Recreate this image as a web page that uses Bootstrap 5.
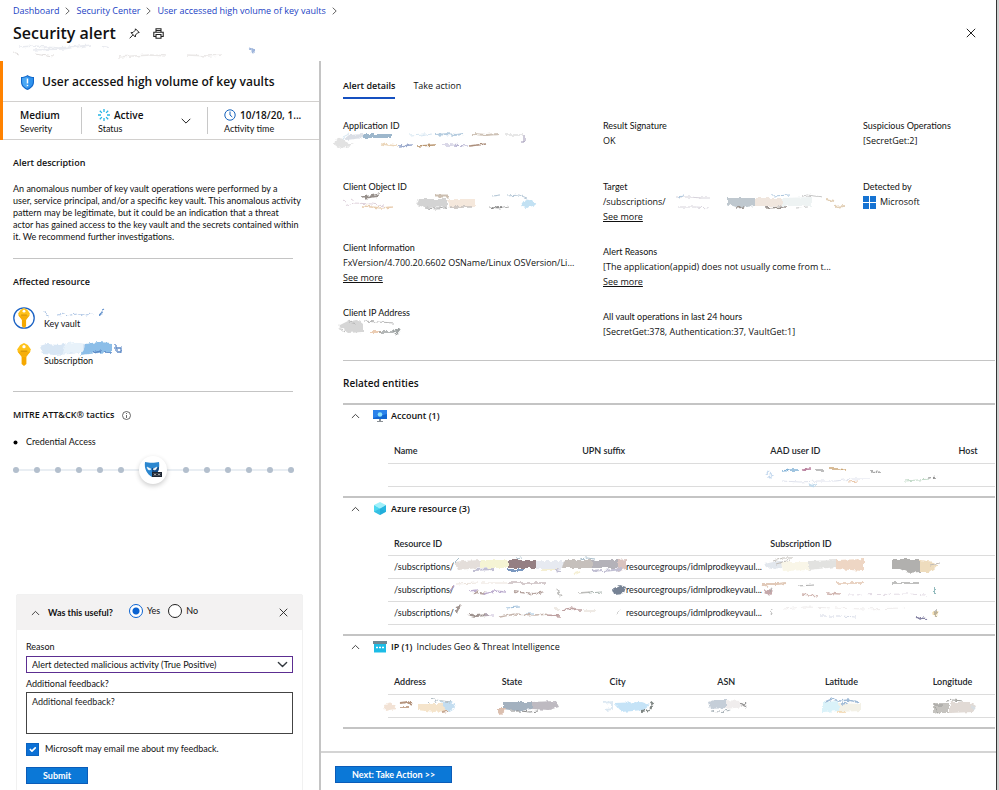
<!DOCTYPE html>
<html lang="en">
<head>
<meta charset="utf-8">
<meta name="viewport" content="width=device-width, initial-scale=1">
<title>Security alert</title>
<link href="https://cdn.jsdelivr.net/npm/bootstrap@5.3.0/dist/css/bootstrap.min.css" rel="stylesheet">
<style>
:root{--ui:"Open Sans","Noto Sans",sans-serif;--fine:Lato,"Open Sans",sans-serif;--rule:#d2d0ce}
body{font:400 9px/14px var(--ui);color:#111;background:#fff}
svg{display:block;flex:none;overflow:visible}
button{font-family:inherit}
.fine{font-family:var(--fine);font-size:9px}
.icon-btn{padding:0;border:0;background:none;line-height:0;color:#222}
.smear{filter:url(#rough);opacity:.85}
.frame{min-height:100vh;border-right:2px solid #cfcfcf}
.blade{min-width:0;border-right:1px solid #333}
.crumbs{padding:4px 13px 0}
.crumbs a{color:#1b3fc4;text-decoration:none}
.crumbs .breadcrumb{gap:6px;font-size:9px;line-height:14px;margin:0}
.page-title{font-size:16px;line-height:22px;font-weight:600}
.head-row{padding:2px 20px 0 13px;height:28px;gap:13px}
.head-note{height:15px;padding-left:13px}
.side{flex:0 0 321px;border-right:2px solid #c4c4c4}
.alert-head{border-left:3px solid #ff8200}
.alert-name{font-size:12px;font-weight:600;line-height:20px;padding:11px 18px 9px;border-bottom:1px solid var(--rule)}
.facts{border-bottom:1px solid var(--rule);padding:5px 0}
.fact{height:27px}
.fact.severity{flex:0 0 78px;padding-left:17px}
.fact.state{flex:0 0 126px}
.fact.split{border-left:1px solid #c8c8c8}
.fact-value{font-size:10px;line-height:16px;font-weight:600}
.fact-label{font-family:var(--fine);line-height:11px}
.side-body{padding:16px 13px 0}
.side-body hr,.details hr{margin:0;opacity:1;color:#c4c4c4}
.side-rule{width:280px;max-width:100%}
.h-mini{font-size:9px;line-height:14px;font-weight:600;margin:0}
.desc{line-height:12px;margin:13px 0 15px;white-space:nowrap}
.resources{padding:16px 0 24px;line-height:12px}
.resources .vault{padding-bottom:12px;gap:9px}
.resources .sub{gap:5px}
.tactic{padding-top:13px}
.track{height:28px;width:281px;max-width:100%;margin-top:7px;background:linear-gradient(#e9eef3,#e9eef3) center/100% 2px no-repeat}
.track i{width:6px;height:6px;border-radius:50%;background:#b3bfcd}
.track b{width:28px;height:28px;border-radius:50%;background:#fff;box-shadow:0 2px 5px #0003;padding:5px}
.feedback{margin:0 17px;box-shadow:0 0 1px #0005;background:#fff}
.feedback-head{background:#f3f2f2;height:35px;padding:0 14px}
.feedback-body{padding:10px 9px 6px}
.feedback .form-check-input{margin:0;float:none;border-color:#222;box-shadow:none}
.feedback .form-check-input[type=radio]{width:14px;height:14px}
.feedback .form-check-input[type=radio]:checked{background:radial-gradient(circle,#0b63d1 0 3px,#fff 4px);border-color:#0b63d1}
.feedback .form-check-input[type=checkbox]{width:13px;height:13px;border-radius:0;background-color:#0b70d5;border-color:#0b63c0;background-size:11px}
.feedback .form-select,.feedback .form-control{font:9px/12px var(--fine);color:#111;border-radius:0;padding:1px 5px;box-shadow:none}
.feedback .form-select{height:17px;border:1px solid #5c2e91;background-position:right 4px center;background-size:11px;margin:2px 0 4px}
.feedback .form-control{height:42px;border:1px solid #444;resize:none;padding:3px 5px;margin-top:1px}
.feedback .form-control::placeholder{color:#222}
.mail-row{gap:6px;padding:8px 0 11px}
.solid-btn{font:700 9px/15px var(--fine);padding:0 16px;border:1px solid #0b5cb8;border-radius:0;background:#0b78d7;color:#fff}
.main{min-width:0}
.details{padding:18px 1px 0 22px;flex:1 0 auto}
.tabs{gap:18px}
.tabs .nav-link{padding:0 0 4px;border:0;border-bottom:2px solid transparent;color:#111;font-size:9px;line-height:14px;border-radius:0}
.tabs .nav-link.active{border-color:#1550c0;font-weight:600}
.field-cols{margin-top:19px;padding-bottom:20px}
.field-col{flex:0 0 260px;min-width:0}
.field-col:last-child{flex:1 1 0}
.field{min-height:61px}
.field.tall{min-height:65px}
.field:last-child{min-height:0}
.field dt{font:400 9px/15px var(--fine)}
.field dd{margin:0;line-height:16px;white-space:nowrap}
.field a{display:block;line-height:13px;color:#111}
.related{font-size:10px;line-height:14px;font-weight:600;margin:15px 0 13px}
.entity{border-top:2px solid #c4c4c4;padding-bottom:9px}
.entity-head{padding:0 8px 12px;height:34px;line-height:18px}
.entity-head button{width:10px;margin-right:12px}
.entity-table{margin:0 0 0 45px;width:calc(100% - 45px);table-layout:fixed;font-size:9px}
.entity-table>:not(caption)>*>*{padding:0 6px;height:23px;border-bottom:1px solid #dcdcdc;vertical-align:middle;line-height:14px;white-space:nowrap}
.entity-table>thead>tr>th{height:24px;font:600 9px/23px var(--fine)}
.entity-table .wide{width:31%}
.entity-table .wider{width:62%}
.entity-table .even{width:17.75%}
.last-line{border-top:2px solid #c4c4c4;height:22px}
.foot{border-top:2px solid #d4d4d4;padding:13px 13px 7px 14px}
</style>
<script src="https://cdn.jsdelivr.net/npm/bootstrap@5.3.0/dist/js/bootstrap.bundle.min.js"></script>
</head>
<body>
<svg width="0" height="0" class="position-absolute" aria-hidden="true">
<defs>
<filter id="rough" x="-10%" y="-30%" width="120%" height="160%"><feTurbulence type="fractalNoise" baseFrequency=".25" numOctaves="2" seed="4" result="n"/><feDisplacementMap in="SourceGraphic" in2="n" scale="4" xChannelSelector="R" yChannelSelector="G"/></filter>
<symbol id="up" viewBox="0 0 10 6"><path d="M1 5.2 5 1.2 9 5.2" fill="none" stroke="#333" stroke-width="1"/></symbol>
<symbol id="sep" viewBox="0 0 5 8"><path d="M.7.7 4.2 4 .7 7.3" fill="none" stroke="#555" stroke-width=".9"/></symbol>
<symbol id="cross" viewBox="0 0 10 10"><path d="M.8.8 9.2 9.2M9.2.8.8 9.2" fill="none" stroke="#222" stroke-width="1"/></symbol>
<symbol id="key" viewBox="0 0 16 24"><path d="M5.500 12h5v10L8 24l-2.500-2z" fill="#f5a800"/><path d="M8 0 12 2 15 6.500 14.500 9 10.500 14H5.500L1.500 9 1 6.500 4 2z" fill="#ffc21a"/><path d="M5.500 14h5l4-5h-13z" fill="#f6ae0b"/><circle cx="8" cy="3.800" r="1.700" fill="#fff"/><path d="M4.500 8.500h7" stroke="#c78500"/></symbol>
</defs>
</svg>
<div class="frame d-flex">
<div class="blade d-flex flex-column flex-grow-1">
<header>
<nav class="crumbs" aria-label="breadcrumb">
<ol class="breadcrumb align-items-center">
<li><a href="#">Dashboard</a></li><li aria-hidden="true"><svg width="5" height="8"><use href="#sep"/></svg></li>
<li><a href="#">Security Center</a></li><li aria-hidden="true"><svg width="5" height="8"><use href="#sep"/></svg></li>
<li><a href="#">User accessed high volume of key vaults</a></li><li aria-hidden="true"><svg width="5" height="8"><use href="#sep"/></svg></li>
</ol>
</nav>
<div class="head-row d-flex align-items-center">
<h1 class="page-title m-0">Security alert</h1>
<button class="icon-btn" type="button" aria-label="Pin"><svg width="11" height="11" viewBox="0 0 11 11" fill="none" stroke="#222" stroke-width="1"><path d="M6.500.800 10.200 4.500 8.700 4.800 6.500 7 6.300 9 2 4.700 4 4.500 6.200 2.300zM4 6.800.700 10.300"/></svg></button>
<button class="icon-btn me-auto" type="button" aria-label="Print"><svg width="11" height="11" viewBox="0 0 11 11" fill="none" stroke="#222" stroke-width="1.100"><path d="M3 4V.800h5V4M2.500 8.500H.800V4.200h9.400v4.300H8.500M3 6.500h5v3.800H3zM3 2.500h5"/></svg></button>
<button class="icon-btn" type="button" aria-label="Close"><svg width="10" height="10"><use href="#cross"/></svg></button>
</div>
<div class="head-note"><svg class="smear" width="245" height="15" fill="none" aria-hidden="true"><path d="M6 1 22 0 45 2 68 0 78-1 50 3 20 4M88 0l8 2" stroke="#e6e8ee" stroke-width="1.500"/><path d="M0 6l6 2M22 8l12 2M33 9l8 1" stroke="#ddd9d8"/><path d="M105 11l15-1 18-1 16 1M174 9l20 1 14-1" stroke="#e7e4e3" stroke-width="1.500"/><path d="M236 2l3 1M239 7c3-2 1-4-2-4" stroke="#8aa6d4" stroke-width="1.300"/></svg></div>
</header>
<div class="d-flex flex-grow-1">
<aside class="side d-flex flex-column">
<section class="alert-head">
<h2 class="alert-name d-flex align-items-center gap-2 m-0"><svg width="13" height="15" viewBox="0 0 13 15"><path d="M6.500 0C8.500 1.500 10.500 2 13 2v5c0 4-3 6.500-6.500 8C3 13.500 0 11 0 7V2c2.500 0 4.500-.500 6.500-2z" fill="#1267c9"/><path d="M6.500 1.300c2 1.300 3.500 1.600 5.400 1.800V7c0 3.300-2.300 5.300-5.400 6.800z" fill="#2f93ee"/><path d="M6.500 1.300C4.500 2.600 3 2.900 1.100 3.100V7c0 3.300 2.300 5.300 5.400 6.800z" fill="#4ba8f5"/><path d="M6.500 3.500v5M6.500 9.700v1.500" stroke="#fff" stroke-width="1.500"/></svg>User accessed high volume of key vaults</h2>
<div class="facts d-flex">
<div class="fact severity"><div class="fact-value">Medium</div><div class="fact-label">Severity</div></div>
<div class="fact state split ps-3 d-flex align-items-center"><div class="flex-grow-1"><div class="fact-value d-flex align-items-center gap-1"><svg width="12" height="12" viewBox="0 0 12 12" stroke="#25b5e4" stroke-width="1.300"><path d="M6 0v3M6 9v3M0 6h3M9 6h3M1.800 1.800l2.100 2.100M8.100 8.100l2.100 2.100M10.200 1.800 8.100 3.900M3.900 8.100 1.800 10.200"/></svg>Active</div><div class="fact-label">Status</div></div>
<button class="icon-btn me-3" type="button" aria-label="Change status"><svg width="10" height="6" viewBox="0 0 10 6"><path d="M.700.800 5 5.100 9.300.800" fill="none" stroke="#222"/></svg></button></div>
<div class="fact split ps-3"><div class="fact-value d-flex align-items-center gap-1"><svg width="12" height="12" viewBox="0 0 12 12" fill="none" stroke="#1663bd"><circle cx="6" cy="6" r="5.200"/><path d="M6 2.500V6l2.300 2"/></svg>10/18/20, 1...</div><div class="fact-label">Activity time</div></div>
</div>
</section>
<div class="side-body">
<h3 class="h-mini">Alert description</h3>
<p class="desc fine">An anomalous number of key vault operations were performed by a<br>user, service principal, and/or a specific key vault. This anomalous activity<br>pattern may be legitimate, but it could be an indication that a threat<br>actor has gained access to the key vault and the secrets contained within<br>it. We recommend further investigations.</p>
<hr class="side-rule">
<h3 class="h-mini mt-3">Affected resource</h3>
<div class="resources fine">
<div class="vault d-flex align-items-center">
<svg width="22" height="22" viewBox="0 0 22 22"><circle cx="11" cy="11" r="10.200" fill="#fff" stroke="#1b62c4" stroke-width="1.300"/><use href="#key" x="4" y="1" width="14" height="20"/></svg>
<div class="pt-1"><svg class="smear" width="62" height="9" fill="none" aria-hidden="true"><path d="M1 2l1 4 3 1M14 6l7-1 5 1 8-1 7 1 9-1" stroke="#9cb9df" stroke-dasharray="3 1"/><path d="M55 6l2-1 3-5" stroke="#4e83c6" stroke-width="1.500"/></svg><div>Key vault</div></div>
</div>
<div class="sub d-flex align-items-center">
<svg width="22" height="23" viewBox="0 0 22 23"><use href="#key" x="3" y="0" width="16" height="23"/></svg>
<div><svg class="smear" width="82" height="13" aria-hidden="true"><path d="M0 4 6 2 20 3 28 1 46 2 44 10 30 12 15 13 2 12z" fill="#d2e2f3"/><path d="M25 2l8-2 10 2v8l-20 2z" fill="#e4f0fa"/><path d="M45 2 58 0 72 1v9l-14 1-18 2 4-5z" fill="#78b3e4"/><path d="M76 2v8M76 6h5v4h-4M53 11l8-2M64 10l8 0" fill="none" stroke="#4377bd" stroke-width="1.300"/></svg><div class="ps-1">Subscription</div></div>
</div>
</div>
<hr class="side-rule">
<h3 class="h-mini mt-3 d-flex align-items-center gap-2">MITRE ATT&amp;CK® tactics <svg width="9" height="9" viewBox="0 0 9 9" fill="none" stroke="#444" stroke-width=".8"><circle cx="4.500" cy="4.500" r="4"/><path d="M4.500 4v3M4.500 2v1"/></svg></h3>
<ul class="tactic list-unstyled fine d-flex align-items-center gap-2 m-0"><li aria-hidden="true"><svg width="5" height="5"><circle cx="2.500" cy="2.500" r="2"/></svg></li><li>Credential Access</li></ul>
<div class="track d-flex align-items-center justify-content-between"><i></i><i></i><i></i><i></i><i></i><i></i><b><svg width="18" height="18" viewBox="0 0 18 18"><path d="M1 1c4 1 10 1 14 0 1 7-1 12-7 15C3 13 0 8 1 1z" fill="#2b86cf"/><path d="M8 7c2 0 5 0 7-1 0 4-2 7.500-7 10z" fill="#154a84"/><path d="M3 6l4 2-1 1-2-.500zM13 6 9 8l1 1 2-.500z" fill="#fff" stroke="#fff" stroke-width=".5"/><path d="M8 11h10v5H8z" fill="#1c2430"/><path d="M10 12.500l2 2M12 12.500l-2 2M14 12.500l2 2M16 12.500l-2 2" stroke="#fff" stroke-width=".7"/></svg></b><i></i><i></i><i></i><i></i><i></i><i></i></div>
</div>
<form class="feedback fine mt-auto">
<div class="feedback-head d-flex align-items-center">
<button class="icon-btn me-2" type="button" aria-label="Collapse"><svg width="9" height="6"><use href="#up"/></svg></button>
<strong class="me-3">Was this useful?</strong>
<div class="d-flex align-items-center gap-1 pb-1 me-auto"><input class="form-check-input" type="radio" name="useful" id="yes" checked><label for="yes" class="me-1">Yes</label><input class="form-check-input" type="radio" name="useful" id="no"><label for="no">No</label></div>
<button class="icon-btn" type="button" aria-label="Dismiss"><svg width="9" height="9"><use href="#cross"/></svg></button>
</div>
<div class="feedback-body">
<label for="reason" class="d-block">Reason</label>
<select class="form-select" id="reason"><option>Alert detected malicious activity (True Positive)</option></select>
<label for="more" class="d-block">Additional feedback?</label>
<textarea class="form-control" id="more" placeholder="Additional feedback?"></textarea>
<div class="mail-row d-flex align-items-center"><input class="form-check-input" type="checkbox" id="mail" checked><label for="mail">Microsoft may email me about my feedback.</label></div>
<button type="submit" class="solid-btn">Submit</button>
</div>
</form>
</aside>
<main class="main d-flex flex-column flex-grow-1">
<div class="details">
<ul class="nav tabs"><li><a class="nav-link active" href="#" aria-current="page">Alert details</a></li><li><a class="nav-link" href="#">Take action</a></li></ul>
<div class="field-cols d-flex">
<dl class="field-col m-0">
<div class="field"><dt>Application ID</dt><dd><svg class="smear" width="184" height="16" fill="none" aria-hidden="true"><path d="M-8 8q6-5 9-1t10 3l-6 4-10 1-4-3z" fill="#dedede"/><path d="M1 6l5-4 15-1v4L3 7z" fill="#d5dae2"/><path d="M20 1h28v4H20z" fill="#8dabc4"/><path d="M1 7 0 4l6-3M66 2l16-1M78 3l10-2" stroke="#cfe2ef"/><path d="M92 2l12-1 8 1 8-1" stroke="#a9c4da" stroke-width="2"/><path d="M130 1l14 1 12-1" stroke="#c6b8aa" stroke-width="2"/><path d="M162 2l18 0" stroke="#dadada" stroke-width="1.500"/><path d="M181 2v7M178 9l3 0" stroke="#8d84a8"/><path d="M38 11l16 2" stroke="#e8d0ae" stroke-width="1.500"/><path d="M55 13l14-1" stroke="#899bc4" stroke-width="1.500"/><path d="M74 13l18-1" stroke="#ad8458" stroke-width="1.500"/><path d="M98 12l10 0 16 1" stroke="#a7a3c8"/><path d="M126 13l8-1 9-1" stroke="#9d7b65" stroke-width="1.500"/></svg></dd></div>
<div class="field"><dt>Client Object ID</dt><dd><svg class="smear" width="192" height="16" fill="none" aria-hidden="true"><path d="M76 5h28v8l-20 1-10-3z" fill="#ccc"/><path d="M104 5l28 0v8l-25 1z" fill="#f4e4d7"/><path d="M182 5l8 2 3 4-10 3-6-2z" fill="#b8dcf2"/><path d="M18 3l10-1 9-2M22 4l14-2" stroke="#847b76" stroke-width="1.500"/><path d="M0 6l3 2M8 5l3 2M1 12l10-3 18 1 12 2" stroke="#d8c8d4"/><path d="M20 12l18 2 12-1" stroke="#e5c6a4" stroke-width="1.500"/><path d="M92 2h13" stroke="#c4b4a4" stroke-width="3"/><path d="M82 14l12 1 14-2 20 0M146 13l10 1 10-2" stroke="#9c9c9c"/><path d="M150 2l7-1M164 2l12-1 8 3" stroke="#a8bed0"/><path d="M148 13l12 0" stroke="#666" stroke-width="1.500" stroke-dasharray="2 1"/></svg></dd></div>
<div class="field tall"><dt>Client Information</dt><dd>FxVersion/4.700.20.6602 OSName/Linux OSVersion/Li...</dd><dd><a href="#">See more</a></dd></div>
<div class="field"><dt>Client IP Address</dt><dd><svg class="smear" width="58" height="16" fill="none" aria-hidden="true"><path d="M-5 6 5 1 15 0 20 4v8L5 13z" fill="#cfcfcf"/><path d="M-4 8l5 4M6 2l8 2M20 1l15 1 16 1" stroke="#a8a8a8"/><path d="M28 12l10 0" stroke="#e0b28a" stroke-width="1.500"/><path d="M36 12l14 0 7-3-5 6" stroke="#8a9090" stroke-width="1.500"/></svg></dd></div>
</dl>
<dl class="field-col m-0">
<div class="field"><dt>Result Signature</dt><dd>OK</dd></div>
<div class="field tall"><dt>Target</dt><dd class="d-flex">/subscriptions/<svg class="smear" width="180" height="16" fill="none" aria-hidden="true"><path d="M61 4h28v8l-16 2-12-4z" fill="#b4bfc7"/><path d="M89 4h28v8H89z" fill="#eee2d9"/><path d="M117 4l28-1v9h-28z" fill="#ecf1f2"/><path d="M10 3l14 0 12 1 8 0M12 13l18 0 14 1" stroke="#cfcbd5"/><path d="M12 3l6-1M106 2l18-1" stroke="#9cbcd8"/><path d="M70 14l8-1M98 14l22-1" stroke="#877e79" stroke-width="1.500"/><path d="M136 3l5-2 16 2M130 14l12-1" stroke="#bdbdbd"/><path d="M160 5l8 2M168 13l10-1" stroke="#dec8ab" stroke-width="2"/></svg></dd><dd><a href="#">See more</a></dd></div>
<div class="field tall"><dt>Alert Reasons</dt><dd>[The application(appid) does not usually come from t...</dd><dd><a href="#">See more</a></dd></div>
<div class="field"><dt>All vault operations in last 24 hours</dt><dd>[SecretGet:378, Authentication:37, VaultGet:1]</dd></div>
</dl>
<dl class="field-col m-0">
<div class="field"><dt>Suspicious Operations</dt><dd>[SecretGet:2]</dd></div>
<div class="field"><dt>Detected by</dt><dd class="d-flex align-items-center gap-1"><svg width="13" height="13" viewBox="0 0 13 13" fill="#1673d2"><path d="M0 0h6v6H0zM7 0h6v6H7zM0 7h6v6H0zM7 7h6v6H7z"/></svg>Microsoft</dd></div>
</dl>
</div>
<hr>
<h2 class="related">Related entities</h2>
<section class="entity">
<div class="entity-head d-flex align-items-center"><button class="icon-btn" type="button" aria-label="Collapse Account"><svg width="9" height="6"><use href="#up"/></svg></button><svg width="14" height="13" viewBox="0 0 14 13"><path d="M0 0h14v9H0z" fill="#1167d2"/><path d="M0 0h14v4L0 8z" fill="#2a82ea"/><circle cx="7" cy="4.500" r="2.300" fill="#8fe3fa"/><path d="M6 9h2v2h2v1H4v-1h2z" fill="#8b9095"/></svg><span class="fw-semibold ms-1">Account (1)</span></div>
<table class="table entity-table"><colgroup><col class="wide"><col class="wide"><col class="wide"><col></colgroup>
<thead><tr><th>Name</th><th>UPN suffix</th><th>AAD user ID</th><th>Host</th></tr></thead>
<tbody><tr><td></td><td></td><td><svg class="smear" width="170" height="18" fill="none" aria-hidden="true"><path d="M-3 6l5 2-3 4" stroke="#bcd3ec" stroke-width="3" stroke-dasharray="2 1"/><path d="M13 5l8-1 8 0" stroke="#6ea5d0" stroke-width="1.500"/><path d="M32 4l8-1" stroke="#b06f91" stroke-width="1.500"/><path d="M45 4l8 0M101 6l10-1" stroke="#999" stroke-width="1.500"/><path d="M60 3l8 0 8 1" stroke="#c39860" stroke-width="1.500"/><path d="M12 15l18 1 18-1 18 0 16-2 18 0" stroke="#d9dde9"/><path d="M38 18l4 2 5-3" stroke="#bcd8ec" stroke-width="2"/><path d="M78 16l10-1" stroke="#e5bd9b"/><path d="M134 15l14-1 12-1" stroke="#b6d2bd"/><path d="M158 12l10-1" stroke="#777" stroke-dasharray="3 2"/></svg></td><td></td></tr></tbody></table>
</section>
<section class="entity">
<div class="entity-head d-flex align-items-center"><button class="icon-btn" type="button" aria-label="Collapse Azure resource"><svg width="9" height="6"><use href="#up"/></svg></button><svg width="14" height="13" viewBox="0 0 14 13"><path d="M7 0l6 3-6 3.500L1 3z" fill="#9ff0fa"/><path d="M1 3l6 3.500V13L1 9.700z" fill="#4cd8f0"/><path d="M13 3 7 6.500V13l6-3.300z" fill="#25b6e0"/><path d="M1 9.700 7 6.500 13 9.700 7 13z" fill="#1fa6d6" opacity=".5"/></svg><span class="fw-semibold ms-1">Azure resource (3)</span></div>
<table class="table entity-table"><colgroup><col class="wider"><col></colgroup>
<thead><tr><th>Resource ID</th><th>Subscription ID</th></tr></thead>
<tbody>
<tr class="fine"><td><div class="d-flex align-items-center">/subscriptions/<svg class="smear" width="172" height="18" fill="none" aria-hidden="true"><path d="M0 4l8-1 18-1v8L4 12z" fill="#e0d9d4"/><path d="M26 2h28v8H26z" fill="#f4f3cd"/><path d="M54 2h28v8H54z" fill="#83696e"/><path d="M82 3h28v8H82z" fill="#e3e7ef"/><path d="M110 2h28v8h-30z" fill="#bdb6b1"/><path d="M138 2h28v8h-28z" fill="#a8a5ad"/><path d="M164 2l8-1v10l-8 2z" fill="#d3b9b4"/><path d="M53 12l16 0" stroke="#6385b5" stroke-width="2"/><path d="M62 1l6-1M126 1l7-1 8 1M4 1l-5 5" stroke="#9ab3c2"/><path d="M20 12l20-1M102 12l4 1M138 13l10-1M150 13l18-2" stroke="#b6b3cb" stroke-width="2"/><path d="M88 12l14 0M120 16l6-2" stroke="#f4edcc" stroke-width="2"/></svg>resourcegroups/idmlprodkeyvaul...</div></td><td><svg class="smear" width="170" height="20" fill="none" aria-hidden="true"><path d="M-6 7 8 4h4v7l-12 1z" fill="#dee3ea"/><path d="M11 5l28 0v8l-26 1z" fill="#f8f5e4"/><path d="M39 4l28-1v7l-28 3z" fill="#dedddb"/><path d="M66 3l28-1v12l-28-2z" fill="#ecd0ba"/><path d="M122 2h28v13l-12 1-8-4h-8z" fill="#a4a3a0"/><path d="M150 3l14 2 4 4-8 6h-10z" fill="#ecd6b2"/><path d="M3 4l10-3 10 0M6 7l14-4M160 8l10-2" stroke="#b5b0aa"/></svg></td></tr>
<tr class="fine"><td><div class="d-flex align-items-center">/subscriptions/<svg class="smear" width="172" height="18" fill="none" aria-hidden="true"><path d="M2 3l22-1M26 2h28" stroke="#e7ddd5"/><path d="M54 2h28M82 2l10 0" stroke="#9d8589"/><path d="M0 5l-3 4M14 10l10-1M30 13l10-3 12 1" stroke="#b19fc7" stroke-width="1.500"/><path d="M20 11l12 2M60 10l12 2 8 1 10-2" stroke="#aa9590" stroke-width="2" stroke-dasharray="5 1"/><path d="M102 8l3 5 2 2M124 12l14-1" stroke="#b1b0ad" stroke-width="1.500"/><path d="M134 12l14-1" stroke="#9aa6a1"/><path d="M158 8l8-4 6 2-2 6-10 1z" fill="#5f6d82"/></svg>resourcegroups/idmlprodkeyvaul...</div></td><td><svg class="smear" width="170" height="18" fill="none" aria-hidden="true"><path d="M-8 3l16 0 8-1M-8 4l6 2" stroke="#dcc0ac" stroke-width="2"/><path d="M-6 10l8 2" stroke="#bb9a9c" stroke-width="4"/><path d="M2 7l-2 4M28 5l16-1" stroke="#999"/><path d="M66 2h28" stroke="#ddbba2" stroke-width="1.500"/><path d="M122 2h28" stroke="#9b9b9a" stroke-width="1.500"/><path d="M32 13l16 2M56 12l14 1" stroke="#c9aaa4" stroke-width="1.500"/><path d="M78 14l60-1 18 1" stroke="#ddd4df" stroke-dasharray="6 3"/><path d="M165 5v7" stroke="#56949a" stroke-width="1.500"/></svg></td></tr>
<tr class="fine"><td><div class="d-flex align-items-center">/subscriptions/<svg class="smear" width="172" height="18" fill="none" aria-hidden="true"><path d="M2 4l3-1-3 6M14 10l8 2 12-1" stroke="#8f817c" stroke-width="2"/><path d="M30 11l10 0" stroke="#bdafce"/><path d="M52 4l14-1M70 10l10 0" stroke="#8fb4d4"/><path d="M46 13l15-3 20 1 14-1" stroke="#bda99e" stroke-width="1.500" stroke-dasharray="7 1"/><path d="M92 11l14 1M108 6l10-2 5 2 6 0" stroke="#b39191" stroke-width="1.500"/><path d="M100 5l6 0M130 7l12 0" stroke="#d9cfc3"/><path d="M166 5l-3 6" stroke="#bbb"/></svg>resourcegroups/idmlprodkeyvaul...</div></td><td><svg class="smear" width="170" height="18" fill="none" aria-hidden="true"><path d="M2 5q-3 4 0 7" stroke="#a7a7a7"/><path d="M14 5l20-2 60 2 40-1" stroke="#ebe8e8" stroke-dasharray="12 5"/><path d="M50 12l20 0 16 1" stroke="#ccd2e1" stroke-dasharray="6 2"/><path d="M146 13l10 2" stroke="#726f95" stroke-width="2"/><path d="M163 8l5 2" stroke="#efd69e" stroke-width="5"/><path d="M166 5v7" stroke="#777"/></svg></td></tr>
</tbody></table>
</section>
<section class="entity">
<div class="entity-head d-flex align-items-center"><button class="icon-btn" type="button" aria-label="Collapse IP"><svg width="9" height="6"><use href="#up"/></svg></button><svg width="14" height="12" viewBox="0 0 14 12"><path d="M0 0h14v3H0z" fill="#6f8793"/><path d="M1 3h12v8.500H1z" fill="#1cbce6"/><path d="M3 6.500h2M6 6.500h2M9 6.500h2" stroke="#fff" stroke-width="1.500"/></svg><span class="fw-semibold mx-1">IP (1)</span>Includes Geo &amp; Threat Intelligence</div>
<table class="table entity-table"><colgroup><col class="even"><col class="even"><col class="even"><col class="even"><col class="even"><col></colgroup>
<thead><tr><th>Address</th><th>State</th><th>City</th><th>ASN</th><th>Latitude</th><th>Longitude</th></tr></thead>
<tbody><tr>
<td><svg class="smear" width="62" height="18" fill="none" aria-hidden="true"><path d="M-10 8l8-2 4 6-11 2z" fill="#f0dece"/><path d="M24 7l28 0v7l-12 1-16-2z" fill="#f4e0c2"/><path d="M46 4l12 0 3 6-8 5z" fill="#b9d8ee"/><path d="M6 6l8-1 3 2" stroke="#a78267" stroke-width="2"/><path d="M34 6l5-5 3 5M42 3l14 2" stroke="#a9b5bc"/><path d="M6 10l8 0M48 15l5-1" stroke="#bd9980" stroke-width="2"/></svg></td>
<td><svg class="smear" width="62" height="18" fill="none" aria-hidden="true"><path d="M1 5h29v7l-14 2-8-1-7-1z" fill="#94a4b5"/><path d="M30 5l24-1 3 6-10 3-17-1z" fill="#b3aeb7"/><path d="M-4 11l8 0-4 7-4-3z" fill="#d5b4a2"/><path d="M8 14l10 0 10 1 8-1" stroke="#777" stroke-dasharray="5 1"/></svg></td>
<td><svg class="smear" width="50" height="18" fill="none" aria-hidden="true"><path d="M-7 6l10-1v7l-6 1" stroke="#d6e5f0" stroke-width="2"/><path d="M5 6l28-1 8 3-6 5-22 2z" fill="#bcdff6"/><path d="M32 14l9-1 3-6-3-3" stroke="#68706d" stroke-width="2" stroke-dasharray="4 1"/></svg></td>
<td><svg class="smear" width="42" height="18" fill="none" aria-hidden="true"><path d="M-9 5l6-2h12v8L-7 12z" fill="#bbc6d2"/><path d="M9 3l15 1 3 6-18 2z" fill="#eeebea"/><path d="M24 6l5 4M24 10l5-4" stroke="#888" stroke-width="1.500"/><path d="M-6 14l8 1 12-2" stroke="#98a3aa" stroke-dasharray="4 1"/></svg></td>
<td><svg class="smear" width="42" height="18" fill="none" aria-hidden="true"><path d="M-2 5l16-1v10l-16 1z" fill="#d4f0f8"/><path d="M14 6l22 1v7l-22 1z" fill="#f1efe3"/><path d="M0 5l7-3 8 2 8-1 10 2M16 7l8-1M30 4l4 2" stroke="#8fafd0" stroke-width="1.500"/><path d="M12 15l8 0" stroke="#eab870"/></svg></td>
<td><svg class="smear" width="42" height="18" fill="none" aria-hidden="true"><path d="M0 6l16 0v10l-10 0-6 2z" fill="#bbb9b5"/><path d="M17 5l20 0 6 4-3 6-23 1z" fill="#dcd4ce"/><path d="M2 10l3 6M1 8l8 0M14 4l6-1 10 1" stroke="#8c8c88"/><path d="M38 9l4 3" stroke="#cfd8df" stroke-width="2"/></svg></td>
</tr></tbody></table>
</section>
<div class="last-line"></div>
</div>
<footer class="foot"><button type="button" class="solid-btn">Next: Take Action &gt;&gt;</button></footer>
</main>
</div>
</div>
</div>
</body>
</html>
